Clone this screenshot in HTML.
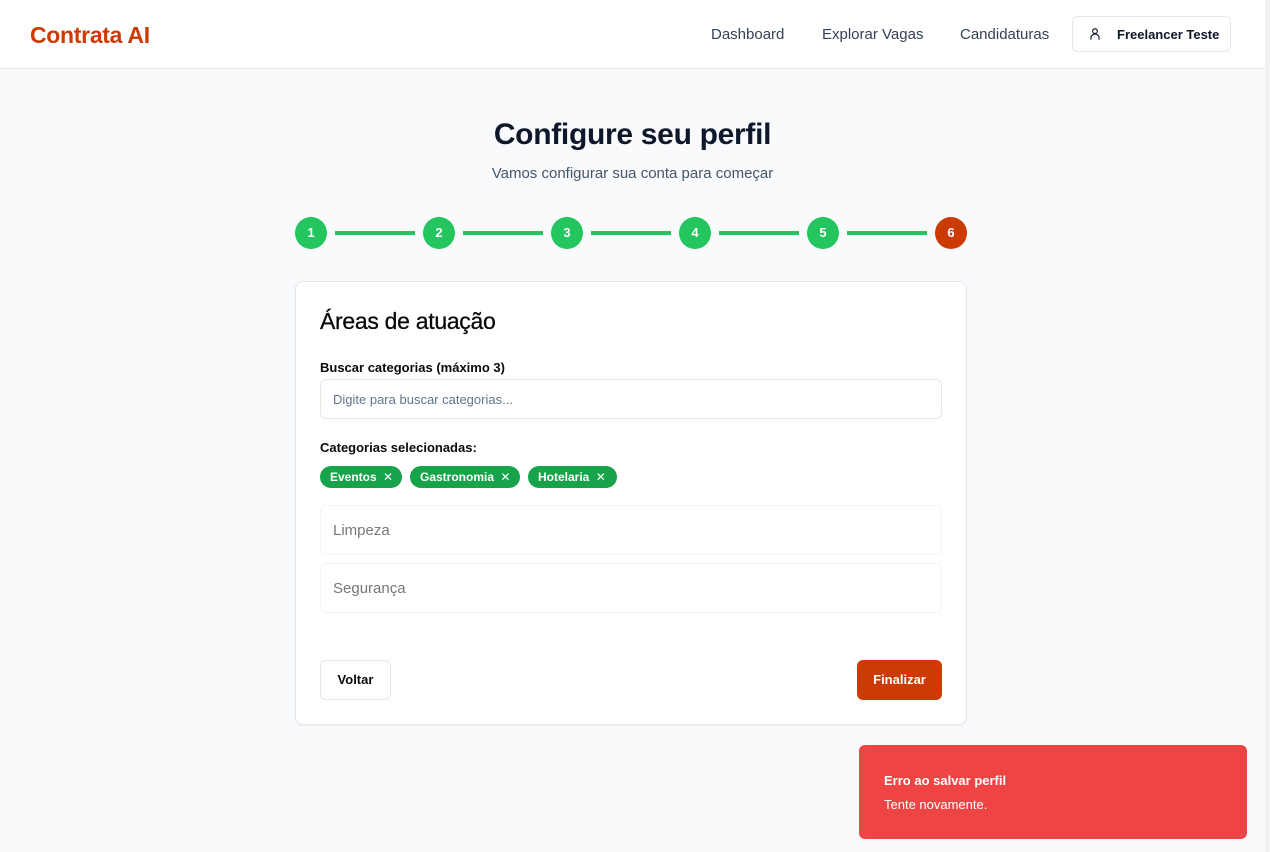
<!DOCTYPE html>
<html><head><meta charset="utf-8"><style>
*{box-sizing:border-box;margin:0;padding:0}
body{width:1270px;height:852px;overflow:hidden;background:#f8fafc;font-family:"Liberation Sans",sans-serif;position:relative;color:#0f172a}
.nav{position:absolute;left:0;top:0;width:1265px;height:69px;background:#fff;border-bottom:1px solid #e2e8f0}
.logo{position:absolute;left:30px;top:22px;font-size:23px;font-weight:bold;color:#cc3a06;letter-spacing:-0.3px}
.nl{position:absolute;top:26px;font-size:15px;color:#334155}
.user{position:absolute;left:1072px;top:16px;width:159px;height:36px;border:1px solid #e2e8f0;border-radius:6px;background:#fff;font-size:13px;font-weight:bold;color:#0f172a}
.sb{position:absolute;left:1265px;top:0;width:5px;height:852px;background:#f1f1f1}
h1{position:absolute;left:0;width:1265px;top:118px;text-align:center;font-size:30px;font-weight:bold;color:#0f172a;letter-spacing:-0.3px}
.sub{position:absolute;left:0;width:1265px;top:165px;text-align:center;font-size:15px;color:#475569}
.step{position:absolute;top:217px;width:32px;height:32px;border-radius:50%;background:#22c55e;color:#fff;font-size:13px;font-weight:bold;text-align:center;line-height:32px}
.line{position:absolute;top:231px;height:4px;width:80px;background:#22c55e}
.card{position:absolute;left:295px;top:281px;width:672px;height:444px;background:#fff;border:1px solid #e2e8f0;border-radius:8px;box-shadow:0 1px 2px rgba(0,0,0,.05)}
.t{position:absolute;left:24px;top:26px;font-size:23px;color:#0a0a0a;letter-spacing:-0.3px;-webkit-text-stroke:0.3px #0a0a0a}
.lbl{position:absolute;left:24px;font-size:13px;font-weight:bold;color:#0a0a0a}
.inp{position:absolute;left:24px;width:622px;border:1px solid #e2e8f0;border-radius:6px;background:#fff;color:#64748b}
.chip{position:absolute;top:184px;height:22px;border-radius:11px;background:#16a34a;color:#fff;font-size:12px;font-weight:bold;line-height:22px;padding-left:10px}
.chip span{font-weight:normal;margin-left:3px}
.btn{position:absolute;top:378px;height:40px;border-radius:6px;font-size:13px;font-weight:bold;line-height:38px;text-align:center}
.toast{position:absolute;left:859px;top:745px;width:388px;height:94px;background:#ef4444;border-radius:6px;color:#fff}
</style></head><body>
<div class="nav">
<div class="logo">Contrata AI</div>
<div class="nl" style="left:711px">Dashboard</div>
<div class="nl" style="left:822px">Explorar Vagas</div>
<div class="nl" style="left:960px">Candidaturas</div>
<div class="user"><svg style="position:absolute;left:15px;top:10px" width="14" height="14" viewBox="0 0 24 24" fill="none" stroke="#0f172a" stroke-width="2" stroke-linecap="round"><circle cx="12" cy="7" r="4"/><path d="M5 21v-2a7 7 0 0 1 14 0v2"/></svg><span style="position:absolute;left:44px;top:10px">Freelancer Teste</span></div>
</div>
<div class="sb"></div>
<h1>Configure seu perfil</h1>
<div class="sub">Vamos configurar sua conta para começar</div>
<div class="step" style="left:295px">1</div><div class="line" style="left:335px"></div>
<div class="step" style="left:423px">2</div><div class="line" style="left:463px"></div>
<div class="step" style="left:551px">3</div><div class="line" style="left:591px"></div>
<div class="step" style="left:679px">4</div><div class="line" style="left:719px"></div>
<div class="step" style="left:807px">5</div><div class="line" style="left:847px"></div>
<div class="step" style="left:935px;background:#cc3a06">6</div>
<div class="card">
<div class="t">Áreas de atuação</div>
<div class="lbl" style="top:78px">Buscar categorias (máximo 3)</div>
<div class="inp" style="top:97px;height:40px;font-size:13px;padding:12px 12px">Digite para buscar categorias...</div>
<div class="lbl" style="top:158px">Categorias selecionadas:</div>
<div class="chip" style="left:24px;width:82px">Eventos <span>✕</span></div>
<div class="chip" style="left:114px;width:110px">Gastronomia <span>✕</span></div>
<div class="chip" style="left:232px;width:89px">Hotelaria <span>✕</span></div>
<div class="inp" style="top:223px;height:50px;font-size:15px;padding:16px 12px;border-color:#f1f5f9;color:#777">Limpeza</div>
<div class="inp" style="top:281px;height:50px;font-size:15px;padding:16px 12px;border-color:#f1f5f9;color:#777">Segurança</div>
<div class="btn" style="left:24px;width:71px;border:1px solid #e2e8f0;color:#0a0a0a">Voltar</div>
<div class="btn" style="left:561px;width:85px;background:#cc3a06;color:#fff;line-height:40px">Finalizar</div>
</div>
<div class="toast"><div style="position:absolute;left:25px;top:28px;font-size:13px;font-weight:bold">Erro ao salvar perfil</div><div style="position:absolute;left:25px;top:52px;font-size:13px">Tente novamente.</div></div>
</body></html>
